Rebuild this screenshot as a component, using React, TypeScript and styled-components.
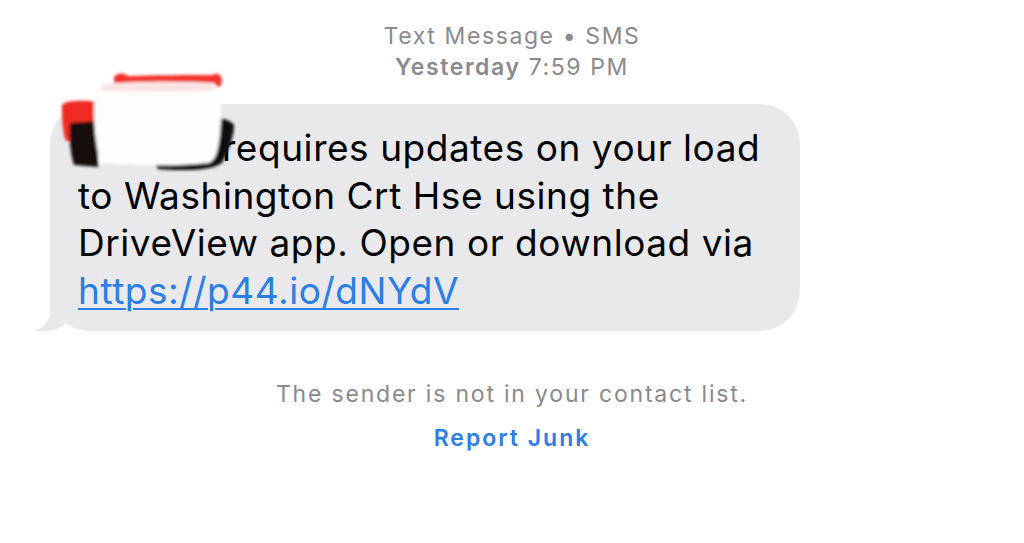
import styled, { createGlobalStyle } from 'styled-components';

const GlobalStyle = createGlobalStyle`
  body {
    margin: 0;
    background: #ffffff;
    font-family: Inter, 'Liberation Sans', sans-serif;
  }
`;

const Page = styled.div`
  width: 1024px;
  height: 543px;
  overflow: hidden;
  display: flex;
  flex-direction: column;
`;

const Header = styled.div`
  display: flex;
  flex-direction: column;
  align-items: center;
  padding-top: 21px;
  color: #8a8a8e;
  font-size: 23px;
  line-height: 31px;
  letter-spacing: 1.6px;
`;

const Strong = styled.span`
  font-weight: 600;
`;

const Thread = styled.div`
  padding: 21px 0 0 50px;
`;

const Bubble = styled.div`
  position: relative;
  width: 750px;
  box-sizing: border-box;
  padding: 20px 20px 17px 28px;
  background: #e9e9eb;
  border-radius: 40px;
  color: #000;
  font-size: 37px;
  line-height: 47.5px;
  letter-spacing: 0.55px;

  &::before {
    content: '';
    position: absolute;
    bottom: 0;
    left: -16px;
    width: 42px;
    height: 38px;
    background: #e9e9eb;
    border-bottom-right-radius: 30px;
  }

  &::after {
    content: '';
    position: absolute;
    bottom: 0;
    left: -22px;
    width: 22px;
    height: 40px;
    background: #ffffff;
    border-bottom-right-radius: 20px;
  }
`;

// the blotted-out sender name in front of "requires"
const Redacted = styled.span`
  position: relative;
  display: inline-block;
  width: 144px;
  height: 1px;
`;

const Smudge = styled.svg`
  position: absolute;
  left: -16px;
  bottom: -14px;
  overflow: visible;
`;

const Link = styled.a`
  color: #2a7ee6;
  text-decoration: underline;
  text-decoration-thickness: 2px;
  text-underline-offset: 4px;
`;

const Footer = styled.div`
  display: flex;
  flex-direction: column;
  align-items: center;
  gap: 16px;
  padding-top: 49px;
  font-size: 23px;
  line-height: 28px;
`;

const Note = styled.div`
  color: #8a8a8e;
  letter-spacing: 1.8px;
`;

const ReportJunk = styled.div`
  color: #2a7ee6;
  font-weight: 600;
  letter-spacing: 2px;
`;

const Redaction = () => (
  <Redacted>
    <Smudge width="180" height="100" viewBox="0 0 180 100">
      <defs>
        <filter id="soft" x="-10%" y="-10%" width="120%" height="120%">
          <feGaussianBlur stdDeviation="1.6" />
        </filter>
      </defs>
      <g filter="url(#soft)">
        <path d="M52 2 C56 -3 62 -2 66 1 C95 0 125 0 150 0 C156 -3 160 0 160 6 L158 12 L52 12 Z" fill="#f2302a" />
        <path d="M0 30 C4 25 20 25 38 27 L38 66 L4 66 C0 56 0 40 0 30 Z" fill="#ef2b24" />
        <path d="M8 48 L36 46 L36 92 L12 90 C8 78 7 60 8 48 Z" fill="#151111" />
        <path d="M128 46 C146 40 166 42 172 50 C172 62 166 76 160 88 C150 96 120 96 96 94 L90 84 Z" fill="#111" />
        <path d="M34 10 C70 6 120 6 152 8 C160 16 160 40 158 60 C156 76 154 86 146 88 C110 92 70 90 38 88 C32 62 30 34 34 10 Z" fill="#fdfdfd" />
        <path d="M40 9 C80 6 120 6 152 9 L152 16 C120 17 80 17 40 16 Z" fill="#f8e4e4" />
      </g>
    </Smudge>
  </Redacted>
);

export default function App() {
  return (
    <Page>
      <GlobalStyle />
      <Header>
        <div>Text Message • SMS</div>
        <div>
          <Strong>Yesterday</Strong> 7:59 PM
        </div>
      </Header>
      <Thread>
        <Bubble>
          <Redaction />
          requires updates on your load
          <br />
          to Washington Crt Hse using the
          <br />
          DriveView app. Open or download via
          <br />
          <Link href="#">https://p44.io/dNYdV</Link>
        </Bubble>
      </Thread>
      <Footer>
        <Note>The sender is not in your contact list.</Note>
        <ReportJunk>Report Junk</ReportJunk>
      </Footer>
    </Page>
  );
}
